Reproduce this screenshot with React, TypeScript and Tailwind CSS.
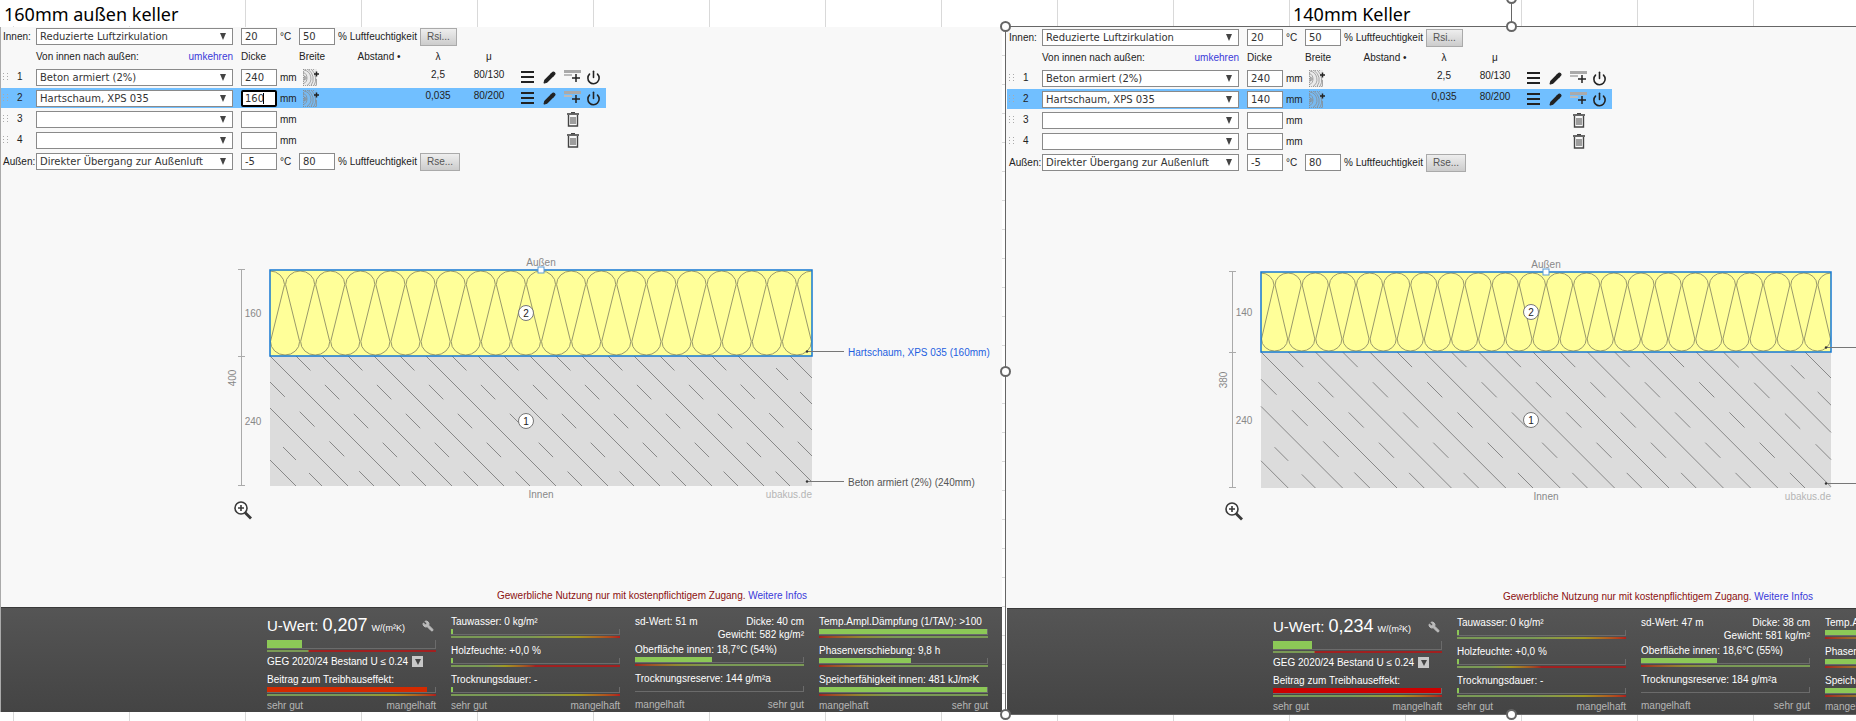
import { Pencil, Power, Wrench } from 'lucide-react';

type Layer = { name: string; thickness: string; lambda?: string; mu?: string };

type Drawing = {
  left: number;
  right: number;
  top: number;
  split: number;
  bottom: number;
  waves: number;
  total: string;
  outer: string;
  inner: string;
  named: boolean;
};

type Result = {
  uValue: string;
  uBar: number;
  ghgBar: number;
  ghgColor: string;
  sd: string;
  thickness: string;
  weight: string;
  surface: string;
  surfaceBar: number;
  reserve: string;
};

type PanelData = {
  id: string;
  layers: Layer[];
  focused: boolean;
  drawing: Drawing;
  result: Result;
};

const panels: PanelData[] = [
  {
    id: 'a',
    focused: true,
    layers: [
      { name: 'Beton armiert (2%)', thickness: '240', lambda: '2,5', mu: '80/130' },
      { name: 'Hartschaum, XPS 035', thickness: '160', lambda: '0,035', mu: '80/200' },
      { name: '', thickness: '' },
      { name: '', thickness: '' },
    ],
    drawing: {
      left: 270,
      right: 812,
      top: 271,
      split: 357,
      bottom: 487,
      waves: 18,
      total: '400',
      outer: '160',
      inner: '240',
      named: true,
    },
    result: {
      uValue: '0,207',
      uBar: 21,
      ghgBar: 95.5,
      ghgColor: '#d42a00',
      sd: '51 m',
      thickness: '40 cm',
      weight: '582 kg/m²',
      surface: '18,7°C (54%)',
      surfaceBar: 46,
      reserve: '144 g/m²a',
    },
  },
  {
    id: 'b',
    focused: false,
    layers: [
      { name: 'Beton armiert (2%)', thickness: '240', lambda: '2,5', mu: '80/130' },
      { name: 'Hartschaum, XPS 035', thickness: '140', lambda: '0,035', mu: '80/200' },
      { name: '', thickness: '' },
      { name: '', thickness: '' },
    ],
    drawing: {
      left: 255,
      right: 825,
      top: 272,
      split: 352,
      bottom: 488,
      waves: 21,
      total: '380',
      outer: '140',
      inner: '240',
      named: false,
    },
    result: {
      uValue: '0,234',
      uBar: 23.5,
      ghgBar: 100,
      ghgColor: '#cc0000',
      sd: '47 m',
      thickness: '38 cm',
      weight: '581 kg/m²',
      surface: '18,6°C (55%)',
      surfaceBar: 45.5,
      reserve: '184 g/m²a',
    },
  },
];

function MaterialSelect({ value, label }: { value: string; label: string }) {
  return (
    <div className="relative w-[197px] shrink-0">
      <select
        aria-label={label}
        defaultValue={value}
        className="block h-[17px] w-full appearance-none border border-[#8a8a8a] bg-white pl-[3px] font-['DejaVu_Sans',sans-serif] text-[10px] leading-[15px] text-[#333]"
      >
        <option value={value}>{value}</option>
      </select>
      <svg className="pointer-events-none absolute right-[7px] top-[5px]" width="6" height="7" viewBox="0 0 6 7">
        <path d="M0 0h6L3 7z" fill="#444" />
      </svg>
    </div>
  );
}

function NumberBox({ value, label, focused = false }: { value: string; label: string; focused?: boolean }) {
  return (
    <div className="relative w-9 shrink-0">
      <input
        type="text"
        aria-label={label}
        defaultValue={value}
        className={`block h-[17px] w-full bg-white font-['DejaVu_Sans',sans-serif] text-[10px] text-[#333] ${
          focused ? 'rounded-xs border-2 border-black pl-[2px]' : 'border border-[#8a8a8a] pl-[3px]'
        }`}
      />
      {focused && <span className="absolute left-[22px] top-[3px] h-[11px] w-px bg-black" />}
    </div>
  );
}

function ClimateRow({ id, title, value, temp, humidity, button }: {
  id: string;
  title: string;
  value: string;
  temp: string;
  humidity: string;
  button: string;
}) {
  return (
    <div className="flex h-[19px] items-center">
      <span className="w-[35px] shrink-0 whitespace-nowrap pl-[2px]">{title}:</span>
      <MaterialSelect value={value} label={`${title} ${id}`} />
      <div className="ml-2 flex items-center">
        <NumberBox value={temp} label={`${title} Temperatur`} />
        <span className="w-[22px] pl-[3px]">°C</span>
        <NumberBox value={humidity} label={`${title} Luftfeuchtigkeit`} />
        <span className="w-[85px] whitespace-nowrap pl-[3px]">% Luftfeuchtigkeit</span>
        <button
          type="button"
          className="h-[18px] border border-[#aaa] bg-linear-to-b from-[#eee] to-[#ccc] px-[6px] text-[10px] leading-none text-[#555]"
        >
          {button}
        </button>
      </div>
    </div>
  );
}

function GrainIcon() {
  return (
    <svg width="17" height="17" viewBox="0 0 17 17" fill="none" stroke="#888" strokeWidth="0.7">
      <rect x="0" y="0" width="14" height="17" fill="#999" fillOpacity="0.15" stroke="none" />
      <circle cx="2" cy="9" r="1.300" />
      <path d="M0 5.500a4 4 0 0 1 0 7M0 3.200a6.200 6.200 0 0 1 0 11.600M1 1a8.500 8.500 0 0 1 3 15.500M5 .5a11 11 0 0 1 3 16M9 1a13 13 0 0 1 2 15.500M13.500 10v6.500" />
      <path d="M0 .5h11M.5 0v17M0 16.500h14" strokeDasharray="1 1" />
      <path d="M11 5h5M13.500 2.500v5" stroke="#222" strokeWidth="1.500" />
    </svg>
  );
}

function MenuIcon() {
  return (
    <svg width="13" height="13" viewBox="0 0 13 13" fill="currentColor">
      <path d="M0 0h13v2H0zM0 5h13v2H0zM0 10h13v2H0z" />
    </svg>
  );
}

function InsertIcon() {
  return (
    <svg width="17" height="16" viewBox="0 0 17 16">
      <path d="M0 1h17v3H0z" fill="#aaa" />
      <path d="M0 5h8v2H0z" fill="#bbb" />
      <path d="M8 9h8M12 5v8" stroke="#222" strokeWidth="1.500" />
    </svg>
  );
}

function TrashIcon() {
  return (
    <svg width="12" height="15" viewBox="0 0 12 15" fill="none" stroke="#444">
      <path d="M0 2h12" strokeWidth="1.600" />
      <path d="M4 .6h4" strokeWidth="1.200" />
      <path d="M1.500 3v11h9V3" strokeWidth="1.400" />
      <path d="M4 5v7M6 5v7M8 5v7" />
    </svg>
  );
}

function LayerTable({ layers, focused }: { layers: Layer[]; focused: boolean }) {
  return (
    <table className="w-[605px] table-fixed border-separate border-spacing-0">
      <colgroup>
        <col className="w-[35px]" />
        <col className="w-[205px]" />
        <col className="w-[58px]" />
        <col className="w-[50px]" />
        <col className="w-[60px]" />
        <col className="w-[58px]" />
        <col className="w-[44px]" />
        <col className="w-[95px]" />
      </colgroup>
      <thead>
        <tr className="h-[21px] text-left [&>th]:p-0 [&>th]:font-normal">
          <th />
          <th>
            <div className="flex w-[197px] justify-between">
              <span>Von innen nach außen:</span>
              <a href="#umkehren" className="text-[#3a3ad8]">umkehren</a>
            </div>
          </th>
          <th>Dicke</th>
          <th>Breite</th>
          <th className="text-center">
            <span className="whitespace-nowrap">Abstand •</span>
          </th>
          <th className="text-center">λ</th>
          <th className="text-center">μ</th>
          <th />
        </tr>
      </thead>
      <tbody>
        {layers.map((layer, i) => (
          <tr
            key={i}
            className={`h-[21px] [&>td]:border-b [&>td]:border-transparent [&>td]:bg-clip-padding [&>td]:p-0 ${
              i === 1 ? '[&>td]:bg-[#71bfff]' : ''
            }`}
          >
            <td>
              <div className="flex items-center gap-[8px] pl-[2px]">
                <svg width="6" height="9" viewBox="0 0 6 9" fill="#aaa">
                  <path d="M0 0h1v1H0zM4 0h1v1H4zM0 3h1v1H0zM4 3h1v1H4zM0 6h1v1H0zM4 6h1v1H4z" />
                </svg>
                <span className="leading-none">{i + 1}</span>
              </div>
            </td>
            <td>
              <MaterialSelect value={layer.name} label={`Material ${i + 1}`} />
            </td>
            <td>
              <div className="flex items-center gap-[3px]">
                <NumberBox value={layer.thickness} label={`Dicke ${i + 1}`} focused={focused && i === 1} />
                mm
              </div>
            </td>
            <td>
              {layer.lambda && (
                <button type="button" aria-label="Breite" className="ml-1 block">
                  <GrainIcon />
                </button>
              )}
            </td>
            <td />
            <td className="pb-1! text-center leading-none">{layer.lambda}</td>
            <td className="pb-1! text-center leading-none">{layer.mu}</td>
            <td>
              {layer.lambda ? (
                <div className="flex items-center pl-[10px] text-[#222]">
                  <button type="button" aria-label="Menü" className="w-[22px]">
                    <MenuIcon />
                  </button>
                  <button type="button" aria-label="Bearbeiten" className="w-[21px]">
                    <Pencil size={13} fill="currentColor" strokeWidth={2} />
                  </button>
                  <button type="button" aria-label="Einfügen" className="w-[22px]">
                    <InsertIcon />
                  </button>
                  <button type="button" aria-label="Ausschalten">
                    <Power size={15} strokeWidth={2.5} />
                  </button>
                </div>
              ) : (
                <button type="button" aria-label="Löschen" className="ml-[56px] block">
                  <TrashIcon />
                </button>
              )}
            </td>
          </tr>
        ))}
      </tbody>
    </table>
  );
}

function insulationPath({ left, right, top, split, waves }: Drawing) {
  const w = (right - left) / waves;
  const r = w / 2 - 0.5;
  const yt = top + r;
  const yb = split - r;
  let d = `M${left} ${top + 1}A${r} ${r} 0 0 1 ${left + r} ${yt}`;
  for (let i = 0; i < waves; i++) {
    const x = left + i * w;
    d += `L${x + 0.5} ${yb}A${r} ${r - 1} 0 0 0 ${x + w - 0.5} ${yb}L${x + w / 2 + 0.5} ${yt}`;
    d += i < waves - 1 ? `A${r} ${r - 1} 0 0 1 ${x + w * 1.5 - 0.5} ${yt}` : `A${r} ${r - 1} 0 0 1 ${right} ${top + 1}`;
  }
  return d;
}

// Full hatch lines alternate with dashed ones, all at 45 degrees
function hatchLines({ left, right, split, bottom }: Drawing) {
  const width = right - left;
  const height = bottom - split;
  const step = height / 5;
  const lines: { x1: number; y1: number; x2: number; y2: number; dash?: string; offset?: number }[] = [];
  for (let k = -4; k * step < width - 1; k++) {
    const c = k * step;
    const x = Math.max(c, 0);
    const y = Math.max(-c, 0);
    const len = Math.min(height - y, width - x);
    const line = { x1: left + x, y1: split + y, x2: left + x + len, y2: split + y + len };
    if (k % 2 === 0) {
      lines.push(line);
      continue;
    }
    const diagonal = len * Math.SQRT2;
    const short = len < height / 2;
    const halves = short ? 4 : Math.round(len / (height / 9) / 2 - 0.5) * 2 + 1;
    const dash = diagonal / halves;
    lines.push({ ...line, dash: `${dash} ${dash}`, offset: short ? dash : 0 });
  }
  return lines;
}

function CrossSection({ drawing }: { drawing: Drawing }) {
  const { left, right, top, split, bottom, total, outer, inner, named } = drawing;
  const mid = (left + right) / 2;
  const dim = left - 29;
  const midOuter = (top + split) / 2;
  const midInner = (split + bottom) / 2;
  return (
    <svg
      width="1001"
      height="414"
      viewBox="1 173 1001 414"
      className="block max-w-none font-['Liberation_Sans',Arial,sans-serif] text-[10px]"
    >
      <rect x={left} y={split} width={right - left} height={bottom - split} fill="#dcdcdc" />
      <g stroke="#888">
        {hatchLines(drawing).map((l, i) => (
          <line key={i} x1={l.x1} y1={l.y1} x2={l.x2} y2={l.y2} strokeDasharray={l.dash} strokeDashoffset={l.offset} />
        ))}
      </g>
      <rect x={left} y={top} width={right - left} height={split - top} fill="#ffff99" />
      <path d={insulationPath(drawing)} fill="none" stroke="#99996a" />
      <rect x={left} y={top} width={right - left} height={split - top} fill="none" stroke="#1478d2" strokeWidth="1.500" />
      <rect x={mid - 3} y={top - 3} width="6" height="6" fill="#fff" stroke="#5a9bd5" />

      <g stroke="#aaa">
        <path d={`M${dim + 0.5} ${top}V${bottom}`} />
        <path d={`M${dim - 3} ${top - 0.5}h7M${dim - 3} ${split + 0.5}h7M${dim - 3} ${bottom - 0.5}h7`} />
      </g>
      <g fill="#888" textAnchor="middle" fontSize="10">
        <text x={mid} y={top - 4}>Außen</text>
        <text x={mid} y={bottom + 12}>Innen</text>
        <text x={dim + 12} y={midOuter + 4}>{outer}</text>
        <text x={dim + 12} y={midInner + 4}>{inner}</text>
        <text transform={`translate(${dim - 5} ${(top + bottom) / 2}) rotate(-90)`}>{total}</text>
        <text x={right} y={bottom + 12} textAnchor="end" fill="#b5b5b5">ubakus.de</text>
      </g>

      <g stroke="#777" fill="#fff">
        <circle cx={mid - 15} cy={midOuter} r="7.500" />
        <circle cx={mid - 15} cy={midInner} r="7.500" />
      </g>
      <g fill="#222" textAnchor="middle" fontSize="10">
        <text x={mid - 15} y={midOuter + 4}>2</text>
        <text x={mid - 15} y={midInner + 4}>1</text>
      </g>

      <g stroke="#777">
        <path d={`M${right - 5} ${split - 4.5}h37M${right - 5} ${bottom - 4.5}h37`} />
      </g>
      <circle cx={right - 5} cy={split - 4.5} r="1.200" fill="#333" />
      <circle cx={right - 5} cy={bottom - 4.5} r="1.200" fill="#333" />
      {named && (
        <>
          <text x={right + 36} y={split} fill="#1f5fe0" fontSize="10">Hartschaum, XPS 035 ({outer}mm)</text>
          <text x={right + 36} y={bottom} fill="#555" fontSize="10">Beton armiert (2%) ({inner}mm)</text>
        </>
      )}

      <g transform={`translate(${left - 36} 502)`} fill="none" stroke="#3a3a3a">
        <circle cx="7" cy="7" r="6" strokeWidth="1.600" fill="#fff" />
        <path d="M4 7h6M7 4v6" strokeWidth="1.600" />
        <path d="M11 11.500l6 6" strokeWidth="2.800" />
      </g>
    </svg>
  );
}

function Meter({ value, color = '#8cc857', scale, tall = false }: {
  value: number;
  color?: string;
  scale: string;
  tall?: boolean;
}) {
  return (
    <div>
      <div className={`border-b border-r border-[#6b6b6b] ${tall ? 'h-[9px]' : 'h-[6px]'}`}>
        <div className={tall ? 'h-2' : 'h-[5px]'} style={{ width: `${value}%`, backgroundColor: color }} />
      </div>
      <div className={`mt-px h-[2px] ${scale}`} />
    </div>
  );
}

function ScaleEnds({ from, to }: { from: string; to: string }) {
  return (
    <div className="flex justify-between leading-[8px] text-[#b5b5b5]">
      <span>{from}</span>
      <span>{to}</span>
    </div>
  );
}

function ResultCell({ label, children }: { label: string; children: React.ReactNode }) {
  return (
    <div className="h-[29px]">
      <div className="h-[14px] whitespace-nowrap leading-[14px]">{label}</div>
      {children}
    </div>
  );
}

function Results({ result }: { result: Result }) {
  const falling = 'bg-linear-to-r from-[#7a9a55] from-45% via-[#a09a20] via-75% to-[#b01c1c]';
  const rising = 'bg-linear-to-r from-[#a02020] via-[#8f8a30] via-25% to-[#7a9a55] to-45%';
  return (
    <footer className="grid grow grid-cols-[repeat(4,169px)] content-start gap-x-[15px] overflow-hidden border-t border-[#3a3a3a] bg-linear-to-b from-[#555] to-[#444] pb-[2px] pl-[266px] pt-[7px] text-white">
      <div>
        <div className="flex h-[25px] items-center justify-between whitespace-nowrap pb-1">
          <div className="flex items-baseline gap-1">
            <span className="text-[15px] leading-none">U-Wert:</span>
            <span className="text-[18px] leading-none">{result.uValue}</span>
            <span className="text-[9px]">W/(m²K)</span>
          </div>
          <button type="button" aria-label="Einstellungen" className="mr-[2px]">
            <Wrench size={12} fill="#bbb" color="#bbb" className="-scale-x-100" />
          </button>
        </div>
        <Meter value={result.uBar} tall scale="bg-linear-to-r from-[#7a9a55] from-24% to-[#a02020] to-25%" />
        <div className="flex h-[21px] items-center gap-1 whitespace-nowrap pb-[2px]">
          GEG 2020/24 Bestand U ≤ 0.24
          <button
            type="button"
            aria-label="Norm wählen"
            className="flex h-[11px] w-[11px] items-center justify-center bg-[#c8c8c8]"
          >
            <svg width="6" height="6" viewBox="0 0 6 6">
              <path d="M0 0h6L3 6z" fill="#444" />
            </svg>
          </button>
        </div>
        <div className="h-[29px]">
          <div className="h-[14px] leading-[14px]">Beitrag zum Treibhauseffekt:</div>
          <Meter value={result.ghgBar} color={result.ghgColor} scale={falling} />
        </div>
        <ScaleEnds from="sehr gut" to="mangelhaft" />
      </div>
      <div>
        <ResultCell label="Tauwasser: 0 kg/m²">
          <Meter value={1} scale={falling} />
        </ResultCell>
        <ResultCell label="Holzfeuchte: +0,0 %">
          <Meter value={1} scale="bg-linear-to-r from-[#7a9a55] from-20% via-[#a09a20] via-32% to-[#a02020] to-50%" />
        </ResultCell>
        <ResultCell label="Trocknungsdauer: -">
          <Meter value={1} scale={falling} />
        </ResultCell>
        <ScaleEnds from="sehr gut" to="mangelhaft" />
      </div>
      <div>
        <div className="flex h-[28px] justify-between leading-[13px]">
          <span>sd-Wert: {result.sd}</span>
          <span className="text-right">
            Dicke: {result.thickness}
            <br />
            Gewicht: {result.weight}
          </span>
        </div>
        <ResultCell label={`Oberfläche innen: ${result.surface}`}>
          <Meter value={result.surfaceBar} scale={rising} />
        </ResultCell>
        <ResultCell label={`Trocknungsreserve: ${result.reserve}`}>
          <div className="h-[6px] border-b border-r border-[#6b6b6b]" />
        </ResultCell>
        <ScaleEnds from="mangelhaft" to="sehr gut" />
      </div>
      <div>
        <ResultCell label="Temp.Ampl.Dämpfung (1/TAV): >100">
          <Meter value={100} scale={rising} />
        </ResultCell>
        <ResultCell label="Phasenverschiebung: 9,8 h">
          <Meter value={55} scale={rising} />
        </ResultCell>
        <ResultCell label="Speicherfähigkeit innen: 481 kJ/m²K">
          <Meter value={100} scale={rising} />
        </ResultCell>
        <ScaleEnds from="mangelhaft" to="sehr gut" />
      </div>
    </footer>
  );
}

function Panel({ data }: { data: PanelData }) {
  return (
    <div className="flex h-full flex-col overflow-hidden bg-[#f8f8f8]">
      <form>
        <ClimateRow id={data.id} title="Innen" value="Reduzierte Luftzirkulation" temp="20" humidity="50" button="Rsi..." />
        <LayerTable layers={data.layers} focused={data.focused} />
        <div className="py-px">
          <ClimateRow id={data.id} title="Außen" value="Direkter Übergang zur Außenluft" temp="-5" humidity="80" button="Rse..." />
        </div>
      </form>
      <CrossSection drawing={data.drawing} />
      <p className="h-[21px] w-[806px] text-right leading-[20px] text-[#8b1010]">
        Gewerbliche Nutzung nur mit kostenpflichtigem Zugang.{' '}
        <a href="#infos" className="text-[#3a3ad8]">Weitere Infos</a>
      </p>
      <Results result={data.result} />
    </div>
  );
}

function Handle({ className }: { className: string }) {
  return <span className={`absolute h-[11px] w-[11px] rounded-full border-2 border-[#666] bg-white ${className}`} />;
}

export default function App() {
  return (
    <div className="min-h-screen overflow-hidden bg-white bg-[repeating-linear-gradient(to_right,transparent_0_13px,#d9d9d9_13px_14px,transparent_14px_116px)] font-['Liberation_Sans',Arial,sans-serif] text-[10px] text-[#222]">
      <header className="grid h-[26px] grid-cols-[1005fr_851fr] font-['Noto_Sans','Open_Sans',sans-serif] text-[18px] leading-[28px] text-black">
        <h1>
          <span className="inline-block h-[26px] bg-white pl-1 pr-2">160mm außen keller</span>
        </h1>
        <h1 className="pl-[285px]">
          <span className="inline-block h-[26px] bg-white px-[3px]">140mm Keller</span>
        </h1>
      </header>
      <main className="grid grid-cols-[1005fr_851fr]">
        <div className="mb-[3px] mt-px min-w-0 bg-[repeating-linear-gradient(to_bottom,transparent_0_28px,#d9d9d9_28px_29px)] pr-[3px]">
          <section className="h-full border-l border-[#aaa]">
            <Panel data={panels[0]} />
          </section>
        </div>
        <section className="relative min-w-0 border-b border-l border-t border-[#666] bg-[#f8f8f8] pl-px pt-px">
          <Panel data={panels[1]} />
          <span className="absolute -top-[26px] left-[505px] h-[26px] w-px bg-[#666]" />
          <Handle className="-left-[6px] -top-[6px]" />
          <Handle className="-left-[6px] top-[339px]" />
          <Handle className="-bottom-[6px] -left-[6px]" />
          <Handle className="-top-[6px] left-[500px]" />
          <Handle className="-top-[34px] left-[500px]" />
          <Handle className="-bottom-[6px] left-[500px]" />
        </section>
      </main>
    </div>
  );
}
